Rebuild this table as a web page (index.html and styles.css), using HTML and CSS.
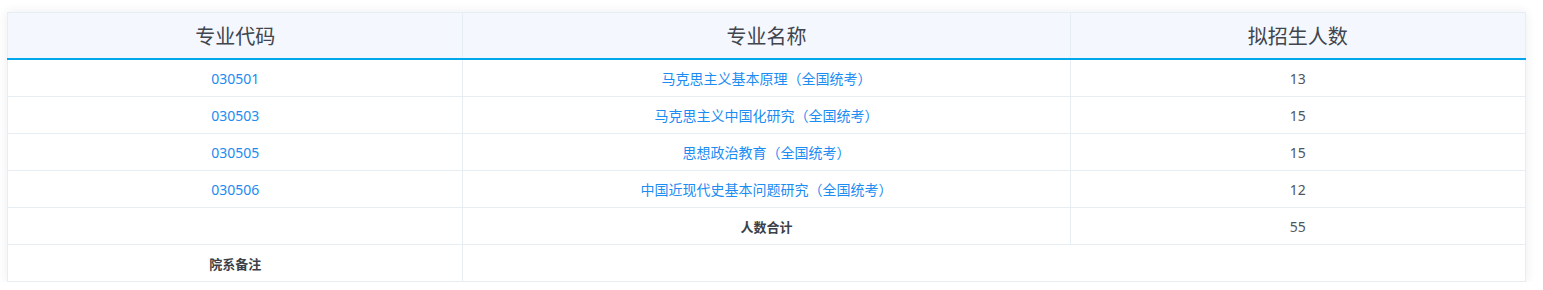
FILE: index.html
```html
<!DOCTYPE html>
<html lang="zh-CN">
<head>
<meta charset="utf-8">
<title>专业目录</title>
<link rel="stylesheet" href="styles.css">
</head>
<body>
<div class="page">
  <div class="card">
    <table class="plan">
      <colgroup>
        <col class="c1"><col class="c2"><col class="c3">
      </colgroup>
      <thead>
        <tr><th>专业代码</th><th>专业名称</th><th>拟招生人数</th></tr>
      </thead>
      <tbody>
        <tr><td class="link">030501</td><td class="link">马克思主义基本原理（全国统考）</td><td>13</td></tr>
        <tr><td class="link">030503</td><td class="link">马克思主义中国化研究（全国统考）</td><td>15</td></tr>
        <tr><td class="link">030505</td><td class="link">思想政治教育（全国统考）</td><td>15</td></tr>
        <tr><td class="link">030506</td><td class="link">中国近现代史基本问题研究（全国统考）</td><td>12</td></tr>
        <tr><td></td><td class="bold">人数合计</td><td>55</td></tr>
        <tr><td class="bold">院系备注</td><td colspan="2"></td></tr>
      </tbody>
    </table>
  </div>
</div>
</body>
</html>
```
FILE: styles.css
```css
html, body {
  margin: 0;
  padding: 0;
  background: #ffffff;
}
body {
  font-family: "Noto Sans", "Noto Sans CJK SC", sans-serif;
}
.page {
  padding: 12px 17px 0 7px;
}
.card {
  box-shadow: 0 0 10px rgba(40, 60, 90, 0.09);
}
.plan {
  width: 100%;
  border-collapse: collapse;
  table-layout: fixed;
  border: 1px solid #e6edf3;
}
.c1, .c3 { width: 30%; }
.c2 { width: 40%; }
.plan th {
  height: 45px;
  background: #f4f8fe;
  color: #40454e;
  font-weight: normal;
  font-size: 20px;
  border-left: 1px solid #e6edf3;
  border-bottom: 2px solid #00a7ea;
  padding: 0;
  text-align: center;
  vertical-align: middle;
}
.plan td {
  height: 36px;
  padding: 0;
  text-align: center;
  vertical-align: middle;
  font-size: 14px;
  color: #50555e;
  border-top: 1px solid #e6edf3;
  border-left: 1px solid #e6edf3;
}
.plan tbody tr:first-child td { border-top: none; }
.plan td.link { color: #1b8cf2; }
.plan td.bold { font-weight: bold; font-size: 13px; color: #3b3f47; }
```
